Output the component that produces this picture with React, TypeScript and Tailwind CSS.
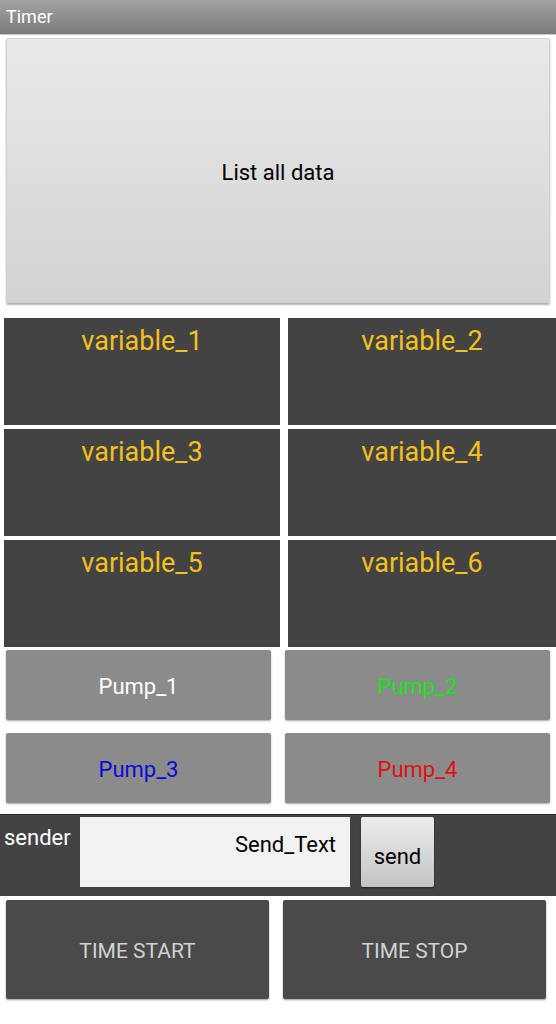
import React from 'react';

const font = { fontFamily: 'Roboto, "Noto Sans", "Liberation Sans", sans-serif' };

function VariableCell({ label }: { label: string }) {
    return (
        <div className="h-[107px] bg-[#434343] flex justify-center pt-[8px]">
            <span className="text-[27px] leading-[30px] text-[#f3c11b]">{label}</span>
        </div>
    );
}

function PumpButton({ label, color }: { label: string; color: string }) {
    return (
        <button className={`h-[70px] rounded-[2px] bg-[#8b8b8b] shadow-[0_1px_2px_rgba(0,0,0,0.35)] text-[22px] pt-[3px] ${color}`}>
            {label}
        </button>
    );
}

export default function App() {
    return (
        <div className="w-[556px] min-h-[1024px] bg-white" style={font}>
            <div className="h-[35px] bg-gradient-to-b from-[#a3a3a3] to-[#7b7b7b] border-b border-[#c8c8c8] flex items-center pl-[6px]">
                <span className="text-white text-[18px] leading-none">Timer</span>
            </div>

            <div className="px-[6px] pt-[3px]">
                <button className="w-full h-[265px] rounded-[2px] border border-[#d0d0d0] bg-gradient-to-b from-[#e9e9e9] to-[#d3d3d3] shadow-[0_2px_2px_rgba(0,0,0,0.3)] text-[22px] text-black pt-[4px]">
                    List all data
                </button>
            </div>

            <div className="mt-[15px] pl-[4px] grid grid-cols-[276px_268px] gap-x-[8px] gap-y-[4px]">
                <VariableCell label="variable_1" />
                <VariableCell label="variable_2" />
                <VariableCell label="variable_3" />
                <VariableCell label="variable_4" />
                <VariableCell label="variable_5" />
                <VariableCell label="variable_6" />
            </div>

            <div className="mt-[3px] px-[6px] grid grid-cols-2 gap-x-[14px] gap-y-[13px]">
                <PumpButton label="Pump_1" color="text-white" />
                <PumpButton label="Pump_2" color="text-[#19e619]" />
                <PumpButton label="Pump_3" color="text-[#0a0ad8]" />
                <PumpButton label="Pump_4" color="text-[#e01010]" />
            </div>

            <div className="mt-[11px] h-[82px] bg-[#434343] border-t border-[#2a2a2a] flex items-start">
                <span className="text-white text-[22px] leading-none pl-[4px] pt-[12px] w-[80px]">sender</span>
                <div className="mt-[2px] w-[270px] h-[70px] bg-[#f2f2f2] flex justify-end pr-[14px] pt-[17px]">
                    <span className="text-black text-[22px] leading-none">Send_Text</span>
                </div>
                <button className="ml-[11px] mt-[2px] w-[73px] h-[70px] rounded-[2px] bg-gradient-to-b from-[#ececec] to-[#c4c4c4] shadow-[0_1px_2px_rgba(0,0,0,0.5)] text-black text-[22px] pt-[8px]">
                    send
                </button>
            </div>

            <div className="mt-[4px] px-[6px] grid grid-cols-[263px_263px] gap-x-[14px]">
                <button className="h-[99px] rounded-[2px] bg-[#4a4a4a] shadow-[0_1px_2px_rgba(0,0,0,0.4)] text-[#d2d2d2] text-[21px] pt-[4px]">
                    TIME START
                </button>
                <button className="h-[99px] rounded-[2px] bg-[#4a4a4a] shadow-[0_1px_2px_rgba(0,0,0,0.4)] text-[#d2d2d2] text-[21px] pt-[4px]">
                    TIME STOP
                </button>
            </div>
        </div>
    );
}
